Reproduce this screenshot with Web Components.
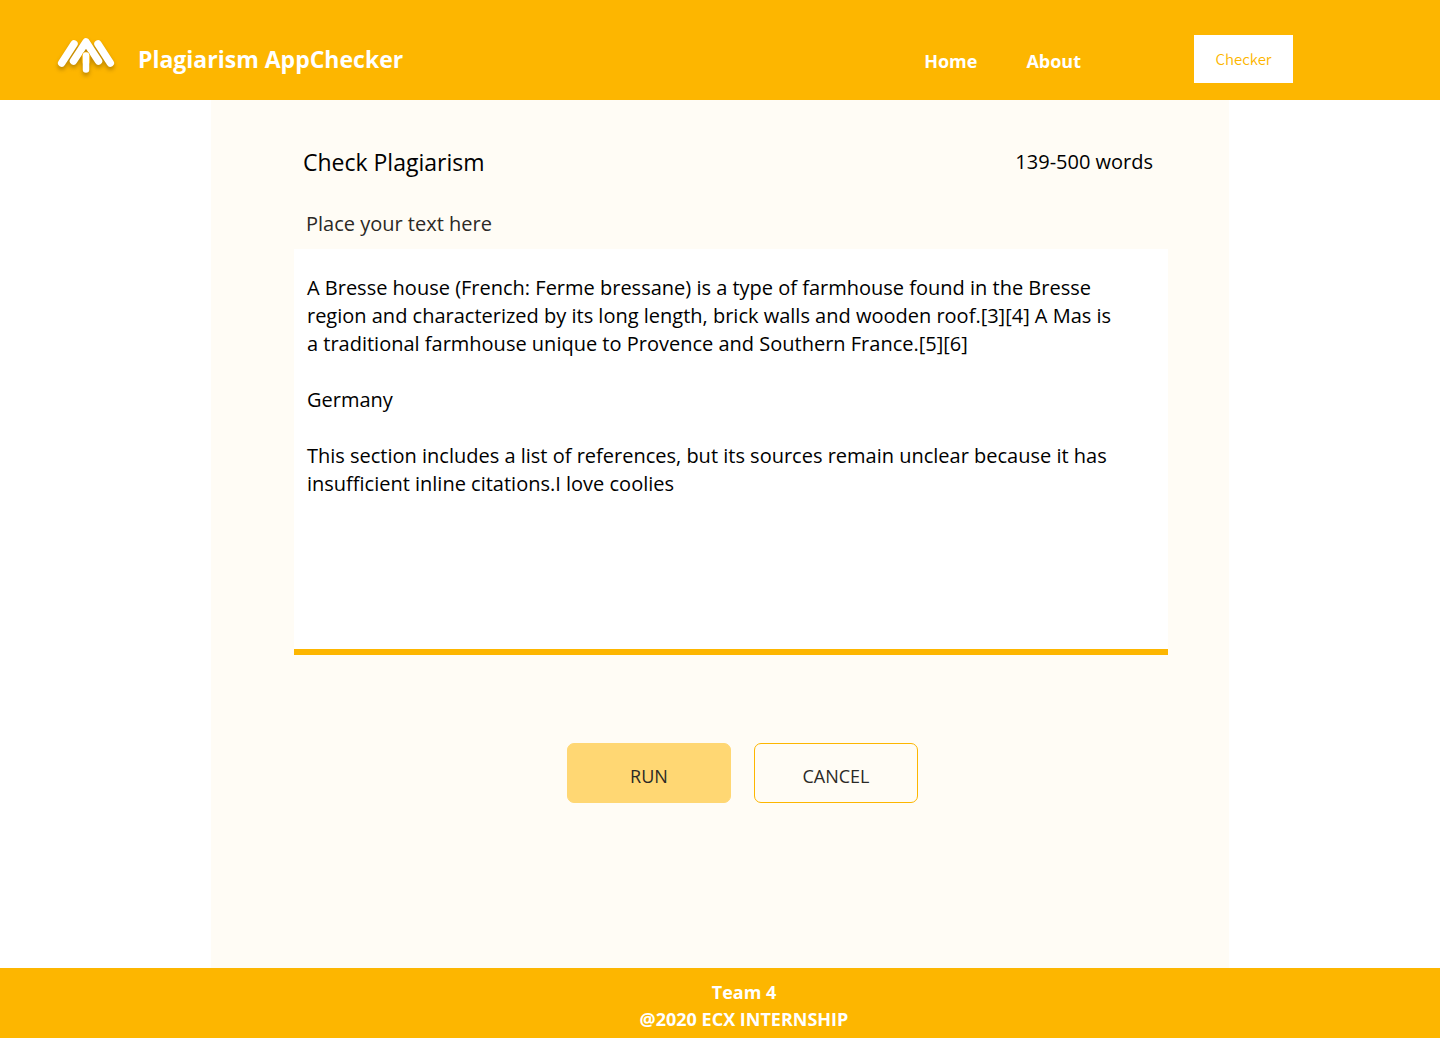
<!DOCTYPE html>
<html lang="en">
<head>
<meta charset="utf-8">
<meta name="viewport" content="width=device-width, initial-scale=1">
<title>Plagiarism AppChecker</title>
<style>
  html, body { margin: 0; min-height: 100%; }
  body {
    --brand: #fdb600;
    --panel: #fffcf5;
    font-family: "Open Sans", "Noto Sans", sans-serif;
    color: #000;
    background: #fff;
  }
</style>
</head>
<body>
<page-shell>
  <site-header slot="header">
    <span slot="brand">Plagiarism AppChecker</span>
    <nav-link href="#home">Home</nav-link>
    <nav-link href="#about">About</nav-link>
    <span slot="action">Checker</span>
  </site-header>
  <checker-panel>
    <span slot="title">Check Plagiarism</span>
    <span slot="count">139-500 words</span>
    <text-entry></text-entry>
    <action-button slot="actions" variant="solid">RUN</action-button>
    <action-button slot="actions" variant="outline">CANCEL</action-button>
  </checker-panel>
  <site-footer slot="footer">
    <span slot="team">Team 4</span>
    <span slot="legal">@2020 ECX INTERNSHIP</span>
  </site-footer>
</page-shell>

<template id="page-shell">
  <style>
    :host { display: flex; flex-direction: column; min-height: 100vh; }
    main { flex: 1; display: flex; padding: 0 14.65%; }
    ::slotted(checker-panel) { flex: 1; }
  </style>
  <slot name="header"></slot>
  <main><slot></slot></main>
  <slot name="footer"></slot>
</template>

<template id="app-logo">
  <style>
    :host { display: block; }
    svg { display: block; overflow: visible; filter: drop-shadow(0 3px 2px rgba(90, 60, 0, .4)); }
  </style>
  <svg width="60" height="44" viewBox="0 0 60 44" fill="none" stroke="#fff" stroke-width="7.5" stroke-linecap="round" stroke-linejoin="round" aria-hidden="true">
    <path d="M5.700 26 18 7M42 7 54.300 26"/>
    <path d="M17.500 24 30 5 42.500 24"/>
    <path d="M30 19V24" stroke="#fdb600" stroke-width="8.5"/>
    <path d="M30 18.500V32.500" stroke-width="6.500"/>
  </svg>
</template>

<template id="site-header">
  <style>
    :host { display: block; background: var(--brand); color: #fff; }
    header { display: flex; align-items: center; min-height: 100px; box-sizing: border-box; padding: 18px 147px 0 56px; }
    .brand { display: flex; align-items: center; gap: 22px; font-size: 23px; line-height: 32px; font-weight: 700; margin-right: auto; }
    nav { display: flex; gap: 49px; padding-top: 4px; }
    button { width: 99px; height: 48px; margin-left: 113px; border: 0; padding: 0; background: #fff; color: var(--brand); font: 350 15px/20px "Noto Sans CJK SC", "Noto Sans", sans-serif; }
  </style>
  <header>
    <div class="brand"><app-logo></app-logo><slot name="brand"></slot></div>
    <nav aria-label="Main"><slot></slot></nav>
    <button type="button"><slot name="action"></slot></button>
  </header>
</template>

<template id="nav-link">
  <style>
    :host { display: block; }
    a { color: #fff; text-decoration: none; font-size: 18px; line-height: 24px; font-weight: 700; }
  </style>
  <a><slot></slot></a>
</template>

<template id="checker-panel">
  <style>
    :host { display: block; box-sizing: border-box; padding: 46px 61px 40px 83px; background: var(--panel); }
    .head { display: flex; justify-content: space-between; align-items: center; padding: 0 15px 0 9px; }
    h1 { margin: 0; font-size: 23px; line-height: 32px; font-weight: 400; }
    p { margin: 0; font-size: 20px; line-height: 28px; }
    .actions { display: flex; flex-wrap: wrap; justify-content: center; gap: 23px; padding: 88px 0 0 23px; }
  </style>
  <div class="head"><h1><slot name="title"></slot></h1><p><slot name="count"></slot></p></div>
  <slot></slot>
  <div class="actions"><slot name="actions"></slot></div>
</template>

<template id="text-entry">
  <style>
    :host { display: block; padding-top: 32px; }
    label { display: block; padding: 0 12px 11px; color: #2b2925; font-size: 20px; line-height: 28px; }
    textarea {
      display: block; box-sizing: border-box; width: 100%; height: 406px; margin: 0; resize: none;
      padding: 25px 48px 12px 13px; border: 0; border-bottom: 6px solid var(--brand); border-radius: 0; outline: 0;
      background: #fff; color: #000; font: inherit; font-size: 20px; line-height: 28px;
    }
  </style>
  <label for="source">Place your text here</label>
  <textarea id="source" spellcheck="false">A Bresse house (French: Ferme bressane) is a type of farmhouse found in the Bresse region and characterized by its long length, brick walls and wooden roof.[3][4] A Mas is a traditional farmhouse unique to Provence and Southern France.[5][6]

Germany

This section includes a list of references, but its sources remain unclear because it has insufficient inline citations.I love coolies</textarea>
</template>

<template id="action-button">
  <style>
    :host { display: block; }
    button { width: 164px; height: 60px; box-sizing: border-box; padding: 6px 0 0; border: 1px solid var(--brand); border-radius: 7px; background: transparent; color: #2b2925; font: inherit; font-size: 18px; line-height: 24px; }
    :host([variant="solid"]) button { background: #ffd773; border-color: #ffd773; }
  </style>
  <button type="button"><slot></slot></button>
</template>

<template id="site-footer">
  <style>
    :host { display: block; background: var(--brand); color: #fff; }
    footer { display: flex; flex-direction: column; align-items: center; gap: 3px; padding: 12px 0 7px 48px; font-size: 18px; line-height: 24px; font-weight: 700; }
  </style>
  <footer><slot name="team"></slot><slot name="legal"></slot></footer>
</template>

<script>
  class TemplateElement extends HTMLElement {
    constructor() {
      super();
      const template = document.getElementById(this.localName);
      this.attachShadow({ mode: "open" }).append(template.content.cloneNode(true));
    }
  }
  class PageShell extends TemplateElement {}
  class AppLogo extends TemplateElement {}
  class SiteHeader extends TemplateElement {}
  class CheckerPanel extends TemplateElement {}
  class TextEntry extends TemplateElement {}
  class ActionButton extends TemplateElement {}
  class SiteFooter extends TemplateElement {}
  class NavLink extends TemplateElement {
    connectedCallback() {
      this.shadowRoot.querySelector("a").href = this.getAttribute("href");
    }
  }
  customElements.define("app-logo", AppLogo);
  customElements.define("nav-link", NavLink);
  customElements.define("site-header", SiteHeader);
  customElements.define("text-entry", TextEntry);
  customElements.define("action-button", ActionButton);
  customElements.define("checker-panel", CheckerPanel);
  customElements.define("site-footer", SiteFooter);
  customElements.define("page-shell", PageShell);
</script>
</body>
</html>
